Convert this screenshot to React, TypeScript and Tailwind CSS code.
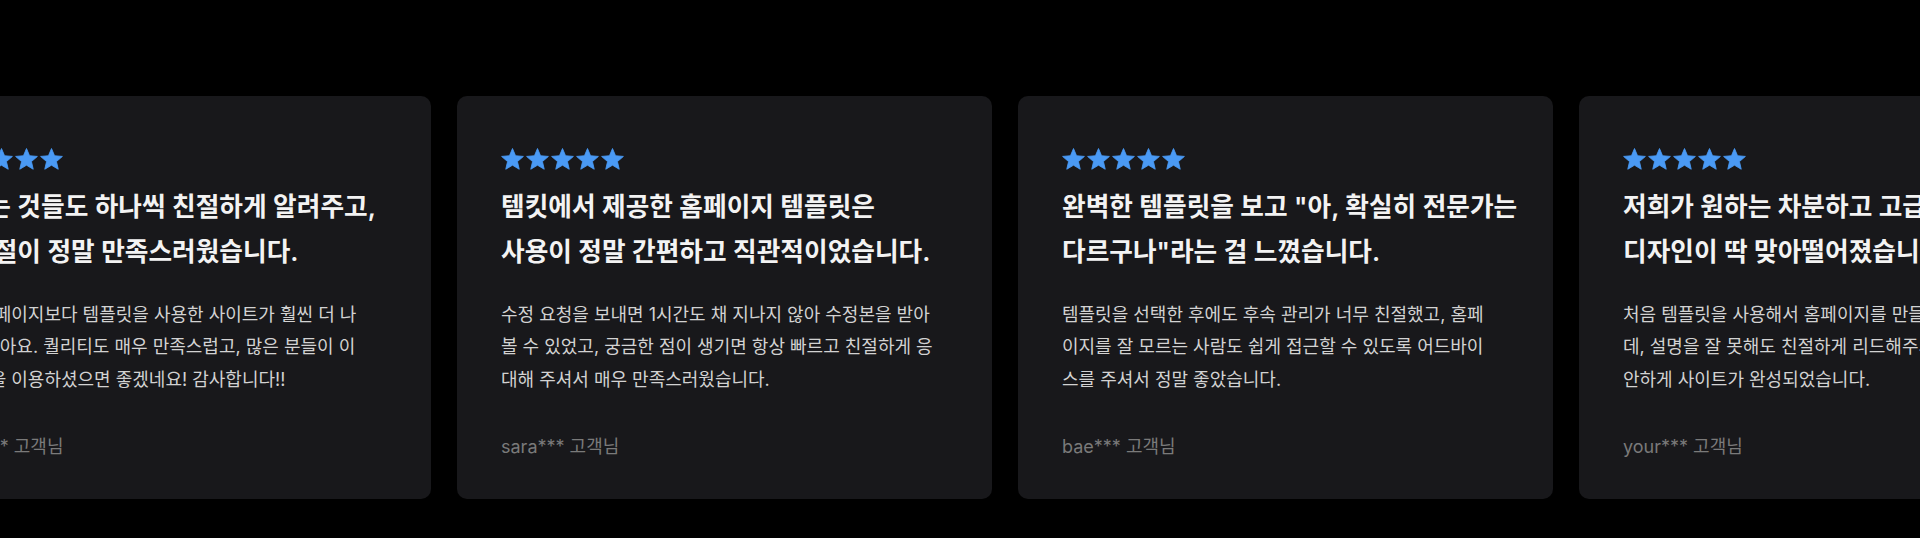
import React from "react";

type Review = {
  title: string[];
  body: string[];
  author: string;
};

const reviews: Review[] = [
  {
    title: ["모르는 것들도 하나씩 친절하게 알려주고,", "그 친절이 정말 만족스러웠습니다."],
    body: [
      "기존 홈페이지보다 템플릿을 사용한 사이트가 훨씬 더 나",
      "은 것 같아요. 퀄리티도 매우 만족스럽고, 많은 분들이 이",
      "템플릿을 이용하셨으면 좋겠네요! 감사합니다!!",
    ],
    author: "kang*** 고객님",
  },
  {
    title: ["템킷에서 제공한 홈페이지 템플릿은", "사용이 정말 간편하고 직관적이었습니다."],
    body: [
      "수정 요청을 보내면 1시간도 채 지나지 않아 수정본을 받아",
      "볼 수 있었고, 궁금한 점이 생기면 항상 빠르고 친절하게 응",
      "대해 주셔서 매우 만족스러웠습니다.",
    ],
    author: "sara*** 고객님",
  },
  {
    title: ["완벽한 템플릿을 보고 \"아, 확실히 전문가는", "다르구나\"라는 걸 느꼈습니다."],
    body: [
      "템플릿을 선택한 후에도 후속 관리가 너무 친절했고, 홈페",
      "이지를 잘 모르는 사람도 쉽게 접근할 수 있도록 어드바이",
      "스를 주셔서 정말 좋았습니다.",
    ],
    author: "bae*** 고객님",
  },
  {
    title: ["저희가 원하는 차분하고 고급스러운", "디자인이 딱 맞아떨어졌습니다."],
    body: [
      "처음 템플릿을 사용해서 홈페이지를 만들어 보는 거였는",
      "데, 설명을 잘 못해도 친절하게 리드해주셔서 편",
      "안하게 사이트가 완성되었습니다.",
    ],
    author: "your*** 고객님",
  },
];

function Star() {
  return (
    <svg
      viewBox="1.5 1.5 21 20.2"
      className="w-[23px] h-[22px]"
      aria-hidden="true"
    >
      <path
        d="M12 17.27L18.18 21l-1.64-7.03L22 9.24l-7.19-.61L12 2 9.19 8.63 2 9.24l5.46 4.73L5.82 21z"
        fill="#4a9af5"
        stroke="#4a9af5"
        strokeWidth="0.8"
        strokeLinejoin="round"
      />
    </svg>
  );
}

function Card({ r }: { r: Review }) {
  return (
    <div className="w-[535px] h-[403px] shrink-0 rounded-[10px] bg-[#18181b] px-[44px] pt-[52px] flex flex-col">
      <div className="flex gap-[2px]">
        <Star />
        <Star />
        <Star />
        <Star />
        <Star />
      </div>
      <h3 className="mt-[14px] text-[25.7px] leading-[45px] font-semibold text-[#f3f3f3] whitespace-nowrap">
        {r.title[0]}
        <br />
        {r.title[1]}
      </h3>
      <p className="mt-[25px] text-[18px] leading-[32.4px] text-[#d2d2d2] whitespace-nowrap">
        {r.body[0]}
        <br />
        {r.body[1]}
        <br />
        {r.body[2]}
      </p>
      <p className="mt-[34.5px] text-[18px] leading-[32.4px] text-[#7a7a7a] whitespace-nowrap">
        {r.author}
      </p>
    </div>
  );
}

export default function App() {
  return (
    <div className="w-full h-[538px] bg-black overflow-hidden pt-[96px] font-['Inter','Noto_Sans_CJK_KR',sans-serif]">
      <div className="flex gap-[26px] w-max -ml-[104px]">
        {reviews.map((r, i) => (
          <Card key={i} r={r} />
        ))}
      </div>
    </div>
  );
}
